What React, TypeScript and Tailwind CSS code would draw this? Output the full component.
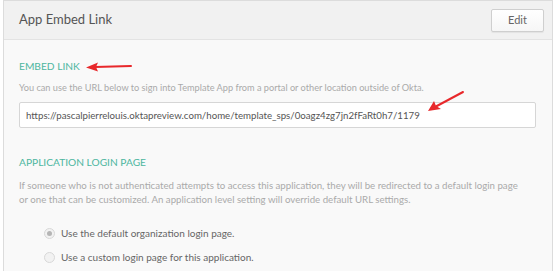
export default function App() {
  return (
    <div className="h-[271px] w-[560px] overflow-hidden bg-white font-['Lato',sans-serif]">
      <div className="ml-[3px] w-[550px] h-[300px] border border-[#dcdcdc] bg-[#f9f9f9]">
        <div className="flex h-[39px] items-center justify-between border-b border-[#e3e3e3] bg-[#f1f1f1] pl-[15px] pr-[8px]">
          <h2 className="text-[13px] text-[#555]">App Embed Link</h2>
          <button
            type="button"
            className="mt-[1px] h-[23px] w-[53px] rounded-[2px] border border-[#cfcfcf] bg-gradient-to-b from-white to-[#f6f6f6] text-[11px] text-[#666] shadow-[0_1px_1px_rgba(0,0,0,0.06)]"
          >
            Edit
          </button>
        </div>

        <div className="px-[15px] pt-[18px]">
          <div className="flex items-center gap-[5px]">
            <h3 className="text-[10.2px] leading-[16px] text-[#4db6a0]">EMBED LINK</h3>
            <svg width="50" height="12" viewBox="0 0 50 12" className="mt-[2px]">
              <path d="M10 6 L46 5" stroke="#e8282b" strokeWidth="2" strokeLinecap="round" />
              <path d="M1 6.5 L13 1.5 L11 6 L13 10.5 Z" fill="#e8282b" />
            </svg>
          </div>
          <p className="mt-[7px] text-[9.2px] leading-[14px] text-[#aaa]">
            You can use the URL below to sign into Template App from a portal or other location outside of Okta.
          </p>
          <div className="relative mt-[7px]">
            <div className="flex h-[26px] w-[517px] items-center rounded-[2px] border border-[#d6d6d6] bg-white px-[6px] text-[9.7px] text-[#555]">
              https://pascalpierrelouis.oktapreview.com/home/template_sps/0oagz4zg7jn2fFaRt0h7/1179
            </div>
            <svg width="40" height="24" viewBox="0 0 40 24" className="absolute left-[406px] top-[-12px]">
              <path d="M38 2 L10 17" stroke="#e8282b" strokeWidth="2" strokeLinecap="round" />
              <path d="M3 21 L9 11 L11 16 L16 19 Z" fill="#e8282b" />
            </svg>
          </div>

          <h3 className="mt-[26px] text-[10.2px] leading-[16px] text-[#4db6a0]">APPLICATION LOGIN PAGE</h3>
          <p className="mt-[8px] whitespace-nowrap text-[9.7px] leading-[14px] text-[#aaa]">
            If someone who is not authenticated attempts to access this application, they will be redirected to a default login page
            <br />
            or one that can be customized. An application level setting will override default URL settings.
          </p>

          <div className="mt-[20px] flex flex-col gap-[10px] pl-[25px]">
            <label className="flex items-center gap-[6px] text-[10px] leading-[14px] text-[#666]">
              <span className="flex h-[11px] w-[11px] items-center justify-center rounded-full border border-[#d8d8d8] bg-[#f2f2f2]">
                <span className="h-[5px] w-[5px] rounded-full bg-[#b5b5b5]" />
              </span>
              Use the default organization login page.
            </label>
            <label className="flex items-center gap-[6px] text-[10px] leading-[14px] text-[#666]">
              <span className="h-[11px] w-[11px] rounded-full border border-[#d8d8d8] bg-[#f2f2f2]" />
              Use a custom login page for this application.
            </label>
          </div>
        </div>
      </div>
    </div>
  );
}
